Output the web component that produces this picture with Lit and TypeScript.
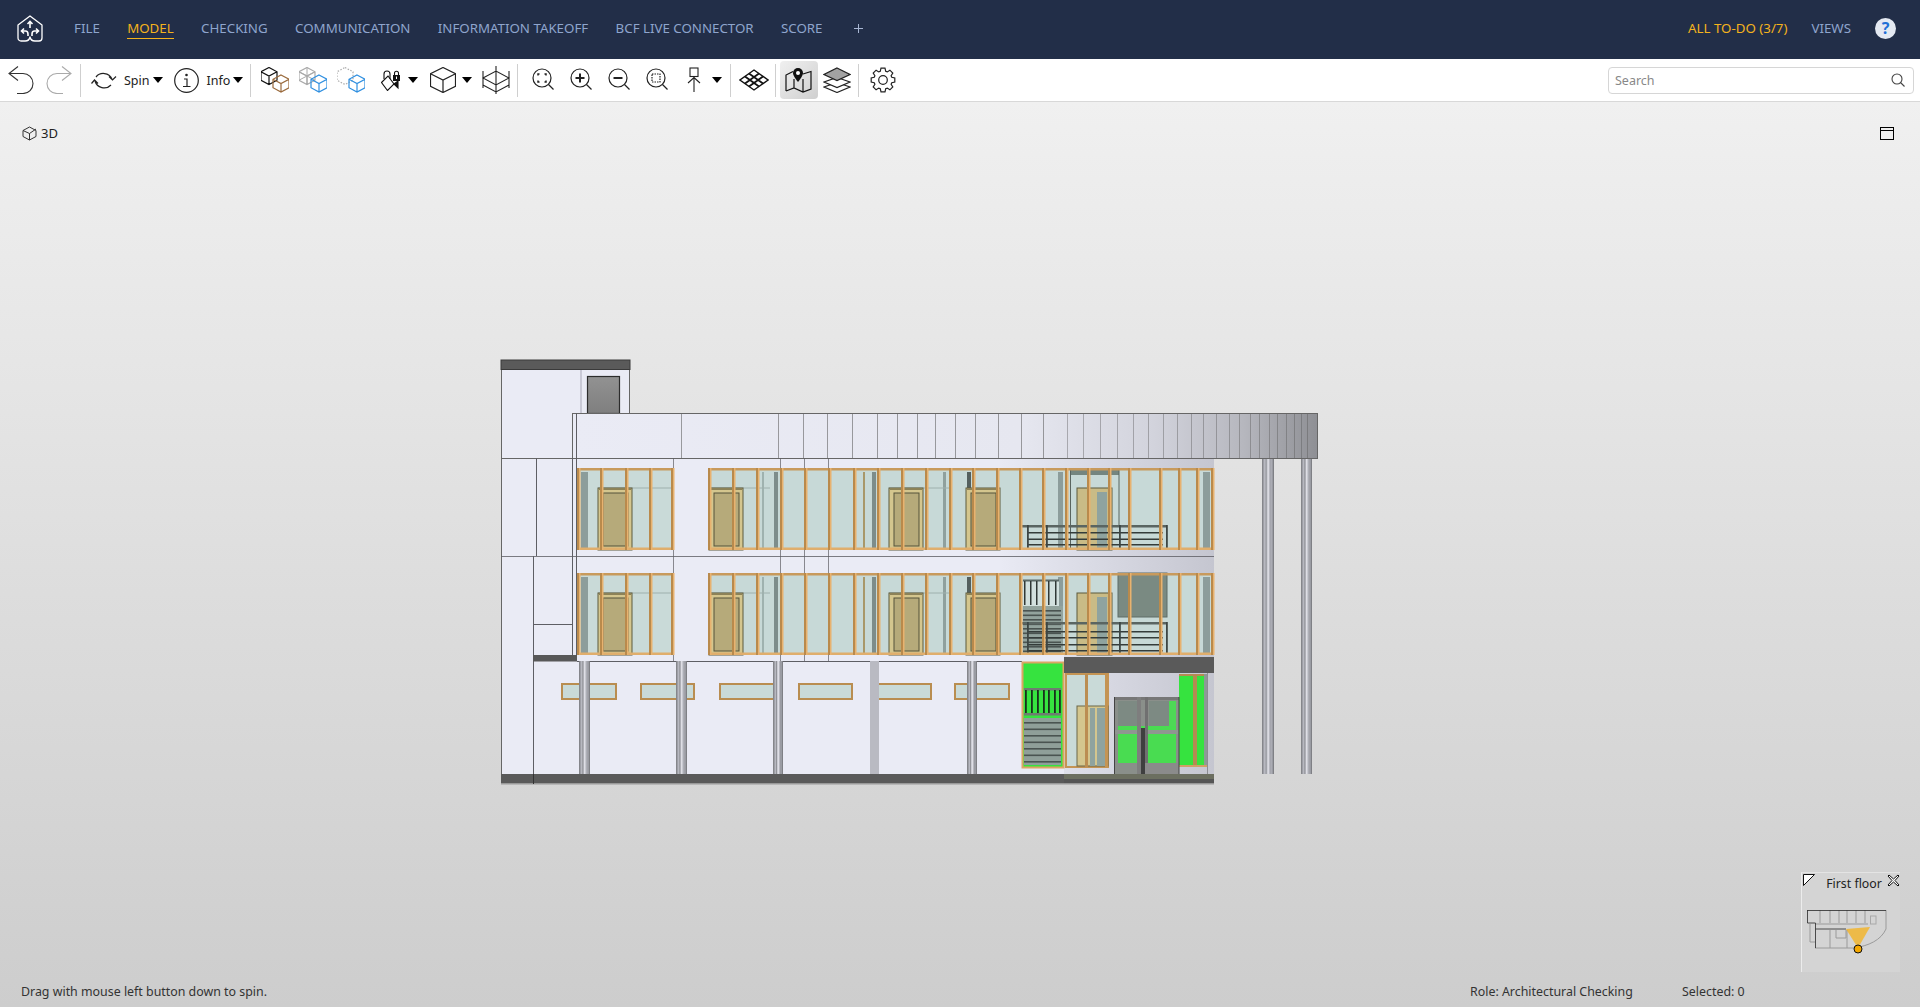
// app.ts
import { LitElement, html, css, svg } from 'lit';
import { customElement } from 'lit/decorators.js';

const NAV = ['FILE', 'MODEL', 'CHECKING', 'COMMUNICATION', 'INFORMATION TAKEOFF', 'BCF LIVE CONNECTOR', 'SCORE'];

/* --- facade measurements, in page pixels --- */
const BAND_LINES = [681, 778, 803, 827, 852, 877, 897, 917, 935, 955, 975, 998, 1021, 1043, 1067, 1083, 1100, 1117, 1133, 1148, 1163, 1177, 1191, 1203, 1216, 1229, 1239, 1250, 1259, 1269, 1277, 1286, 1294, 1301, 1307];
const MULLIONS = [577, 600, 625, 649, 671, 708, 732, 756, 780, 804, 828, 853, 877, 901, 925, 949, 972, 996, 1019, 1042, 1065, 1087, 1108, 1128, 1159, 1178, 1196, 1211];
const DOORS = [598, 709, 889, 966];
const ROWS = [{ top: 468, bottom: 550 }, { top: 573, bottom: 655 }];
const GROUND_COLS = [[579, 11], [676, 11], [773, 10], [870, 9], [967, 10]];
const SMALL_WINDOWS = [[561, 617], [640, 695], [719, 783], [798, 853], [870, 932], [954, 1010]];
// things seen through the glass: x, width, colour
const GLASS_POSTS: [number, number, string][] = [
  [581, 7, '#8c9d9b'], [762, 2, '#9fb2af'], [774, 4, '#7d8d8b'], [863, 2, '#a8986a'], [872, 4, '#7d8d8b'],
  [943, 3, '#8fa09d'], [967, 4, '#54605e'], [1058, 5, '#8c9d9b'], [1203, 7, '#8c9d9b'],
];

/* --- little svg helpers --- */
const cube = (cx: number, cy: number, dx: number, h: number, color: string, extra = '') => svg`
  <path fill="none" stroke=${color} stroke-width="1.2" stroke-dasharray=${extra || 'none'}
    d="M${cx} ${cy - h}L${cx + dx} ${cy - h / 2}V${cy + h / 2}L${cx} ${cy + h}L${cx - dx} ${cy + h / 2}V${cy - h / 2}Z
       ${extra ? '' : `M${cx - dx} ${cy - h / 2}L${cx} ${cy}L${cx + dx} ${cy - h / 2}M${cx} ${cy}V${cy + h}`}"/>`;

const lens = (inner: unknown) => html`
  <svg width="24" height="24" viewBox="-1.500 0.500 24 24" fill="none" stroke="#222" stroke-width="1.2">
    <circle cx="10.500" cy="10.500" r="9"/><path d="M17 17l5 5"/>${inner}
  </svg>`;

const gearPath = () => {
  const pts: string[] = [];
  const teeth = 8;
  for (let i = 0; i < teeth; i++) {
    const a = (i / teeth) * Math.PI * 2 - Math.PI / 2;
    [[-0.3, 9.2], [-0.17, 12], [0.17, 12], [0.3, 9.2]].forEach(([o, r]) => {
      pts.push(`${(13 + Math.cos(a + o) * r).toFixed(1)} ${(13 + Math.sin(a + o) * r).toFixed(1)}`);
    });
  }
  return `M${pts.join('L')}Z`;
};

const ICONS = {
  undo: html`<svg width="26" height="28" viewBox="0 0 26 28" fill="none" stroke="#333" stroke-width="1.1"><path d="M10 0.500L1 7.500L10 14.500M1 7.500H15A10 10 0 0 1 15 27.500H9"/></svg>`,
  redo: html`<svg width="26" height="28" viewBox="0 0 26 28" fill="none" stroke="#aaa" stroke-width="1.1"><path d="M16 0.500L25 7.500L16 14.500M25 7.500H11A10 10 0 0 0 11 27.500H17"/></svg>`,
  spin: html`<svg width="26" height="22" viewBox="0 0 26 22" fill="none" stroke="#222" stroke-width="1.2"><path d="M5 8A9.500 9.500 0 0 1 21 10M18 7.500L21.500 11L25 7.500"/><path d="M4 12A9.500 9.500 0 0 0 20 16M.5 14.500L3.500 11L7 14.500"/></svg>`,
  info: html`<svg width="25" height="25" viewBox="0 0 25 25" fill="none" stroke="#222" stroke-width="1.2"><circle cx="12.500" cy="12.500" r="11.800"/><circle cx="12.500" cy="7" r="1.300" fill="#222" stroke="none"/><path d="M10 11H13V18.500M9 18.500H16.500"/></svg>`,
  showAll: html`<svg width="28" height="26" viewBox="0 0 28 26">${cube(8, 9, 8, 8.500, '#111')}${cube(20, 16.500, 8, 8.500, '#9a6a3c')}</svg>`,
  wire: html`<svg width="28" height="26" viewBox="0 0 28 26">${cube(8, 9, 8, 8.500, '#aaa')}<path d="M0 4.800L16 13.200M16 4.800L0 13.200M8 .5V17.500" stroke="#aaa" fill="none"/>${cube(20, 16.500, 8, 8.500, '#2f8fe0')}</svg>`,
  ghost: html`<svg width="28" height="26" viewBox="0 0 28 26">${cube(8, 9, 8, 8.500, '#aaa', '1.500 1.500')}${cube(20, 16.500, 8, 8.500, '#2f8fe0')}</svg>`,
  paint: html`<svg width="20" height="21" viewBox="0 0 20 21" fill="none" stroke="#111" stroke-width="1.1"><path d="M.5 12.500L7 6L13 14L6.500 20.500Z"/><path d="M3 9V4A3 3 0 0 1 9 4V9"/><rect x="12" y="5" width="7" height="6" fill="#111" stroke="none"/><path d="M13.500 5V3.200A2 2 0 0 1 17.500 3.200V5"/><rect x="15" y="6.500" width="1" height="2.500" fill="#fff" stroke="none"/><path d="M13 14L17 11V18Z" fill="#111"/></svg>`,
  box: html`<svg width="26" height="26" viewBox="0 0 26 26">${cube(13, 13, 12.500, 12.500, '#222')}</svg>`,
  section: html`<svg width="28" height="28" viewBox="0 0 28 28" fill="none" stroke="#222" stroke-width="1.1"><path d="M1 5V22M27 5V22M1 12L14 5L27 12L14 19ZM1 19L14 26L27 19M14 0V28"/></svg>`,
  fit: lens(svg`<path d="M6.500 8V6.500H8M13 6.500H14.500V8M14.500 13V14.500H13M8 14.500H6.500V13" stroke-width="1.500"/>`),
  plus: lens(svg`<path d="M6 10.500H15M10.500 6V15" stroke-width="2"/>`),
  minus: lens(svg`<path d="M6 10.500H15" stroke-width="2"/>`),
  select: lens(svg`<rect x="6.500" y="6.500" width="8" height="8" stroke-dasharray="1.500 1"/>`),
  pin: html`<svg width="14" height="26" viewBox="0 0 14 26" fill="none" stroke="#222" stroke-width="1.1"><rect x="3" y="1" width="8" height="8.500"/><path d="M7 9.500V25M1 16L7 10.500L13 16"/></svg>`,
  grid: html`<svg width="30" height="22" viewBox="0 0 30 22" fill="none" stroke="#111" stroke-width="1.400"><path d="M15 1L29 11L15 21L1 11Z"/><path d="M10 4.500L24 14.500M6 7.500L20 17.500M20 4.500L6 14.500M24 7.500L10 17.500" stroke-width="1.800"/></svg>`,
  map: html`<svg width="28" height="26" viewBox="0 0 28 26" fill="none" stroke="#111" stroke-width="1.200"><path d="M1 24V8L8 4.500M18 7L26 4.500V22L18 25L9 21L1 24M9 12V21M18 12V25"/><path d="M13 15C9.500 10.500 8 8 8 6A5 5 0 0 1 18 6C18 8 16.500 10.500 13 15Z" fill="#111" stroke="none"/><circle cx="13" cy="6" r="2" fill="#fff" stroke="none"/></svg>`,
  layers: html`<svg width="28" height="26" viewBox="0 0 28 26" stroke="#222" stroke-width="1.200"><path d="M14 15.500L27 20L14 25.500L1 20Z" fill="#fff"/><path d="M14 10.500L27 15L14 20.500L1 15Z" fill="#fff"/><path d="M14 1L27 7.500L14 13.500L1 7.500Z" fill="#a2a2a2"/></svg>`,
  gear: html`<svg width="26" height="26" viewBox="0 0 26 26" fill="none" stroke="#222" stroke-width="1.200"><path d=${gearPath()}/><circle cx="13" cy="13" r="4.300"/></svg>`,
};

/* --- building, drawn as one free canvas --- */
const column = (x: number, w: number, y0: number, y1: number) => svg`
  <rect x=${x} y=${y0} width=${w} height=${y1 - y0} fill="#b7b8c0"/>
  <rect x=${x} y=${y0} width="1.500" height=${y1 - y0} fill="#85868b"/>
  <rect x=${x + w * 0.3} y=${y0} width="1" height=${y1 - y0} fill="#929399"/>
  <rect x=${x + w * 0.45} y=${y0} width="1.500" height=${y1 - y0} fill="#dedee5"/>
  <rect x=${x + w * 0.7} y=${y0} width="1" height=${y1 - y0} fill="#9a9ba2"/>
  <rect x=${x + w - 1.5} y=${y0} width="1.500" height=${y1 - y0} fill="#7f8085"/>`;

const door = (x: number, top: number, bottom: number) => svg`
  <rect x=${x} y=${top} width="34" height=${bottom - top} fill="#d4c68e" stroke="#5c5a3c" stroke-width="1"/>
  <rect x=${x + 1} y=${top} width="32" height="2" fill="#8c8258"/>
  <rect x=${x + 5} y=${top + 5} width="25" height=${bottom - top - 9} fill="#b6aa7a" stroke="#55533a" stroke-width="1"/>`;

const balcony = (rail: number, bars: number[], bottom: number) => svg`
  <rect x="1022" y=${rail} width="145" height="2.500" fill="#5a6562"/>
  ${bars.map((y) => svg`<rect x="1027" y=${y} width="136" height="1.500" fill="#343c3a"/>`)}
  ${[1027, 1046, 1119, 1166].map((x) => svg`<rect x=${x} y=${rail} width="1.800" height=${bottom - rail} fill="#3d4644"/>`)}`;

const treads = (x: number, w: number, y0: number, y1: number, step: number) => {
  const lines = [];
  for (let y = y0; y < y1; y += step) {
    lines.push(svg`<rect x=${x} y=${y} width=${w} height="1.600" fill="#4a5451"/>`);
  }
  return lines;
};

const building = () => svg`
  <svg class="canvas" viewBox="0 0 1920 905" width="1920" height="905">
    <defs>
      <linearGradient id="bandFade" gradientUnits="userSpaceOnUse" x1="572" x2="1318" y1="0" y2="0">
        <stop offset="0" stop-color="#eaebf5"/><stop offset=".6" stop-color="#e6e7f0"/>
        <stop offset=".78" stop-color="#d2d3dc"/><stop offset=".9" stop-color="#b6b7be"/><stop offset="1" stop-color="#8e8f94"/>
      </linearGradient>
      <linearGradient id="stripFade" gradientUnits="userSpaceOnUse" x1="1000" x2="1214" y1="0" y2="0">
        <stop offset="0" stop-color="#e9eaf4"/><stop offset="1" stop-color="#c5c6d0"/>
      </linearGradient>
      <linearGradient id="roofDoor" x1="0" x2="0" y1="0" y2="1">
        <stop offset="0" stop-color="#929292"/><stop offset="1" stop-color="#7f7f7f"/>
      </linearGradient>
    </defs>
    <g transform="translate(0 -102)" stroke-width="1">
      <!-- right free-standing columns -->
      ${column(1262, 12, 458, 774)}
      ${column(1301, 11, 458, 774)}

      <!-- tower -->
      <rect x="501.500" y="369" width="128" height="90" fill="#eaebf5" stroke="#666"/>
      <rect x="580" y="369" width="2" height="44" fill="#c9c9d6"/>
      <rect x="501" y="360" width="129" height="9.500" fill="#5a5a5a" stroke="#3a3a3a"/>
      <rect x="587.500" y="376.500" width="32" height="37" fill="url(#roofDoor)" stroke="#2c2c2c" stroke-width="1.200"/>

      <!-- main wall -->
      <rect x="501.500" y="458.500" width="712" height="316" fill="#eaebf5" stroke="#666"/>
      <rect x="1000" y="459" width="214" height="10" fill="url(#stripFade)"/>
      <rect x="1000" y="550" width="214" height="23" fill="url(#stripFade)"/>
      <rect x="1064" y="655" width="150" height="119" fill="url(#stripFade)"/>

      <!-- roof band -->
      <rect x="572.500" y="413.500" width="745" height="45" fill="url(#bandFade)" stroke="#666"/>
      ${BAND_LINES.map((x) => svg`<path d="M${x + 0.5} 414V458" stroke="#555" stroke-opacity=${x < 1067 ? 0.55 : 0.4}/>`)}

      <!-- wall joints -->
      <g fill="none" stroke="#5e5e64">
        <path d="M501 556.500H1214" stroke-opacity=".8"/>
        <path d="M536.500 458V556M533.500 556V784M533 624.500H572M572.500 458V655M576.500 413V655"/>
        <path d="M673.500 458V661M780.500 458V661M804.500 458V661M828.500 458V661" stroke-opacity=".7"/>
        <path d="M577 661.500H1022"/>
      </g>
      <rect x="533" y="655" width="44" height="6.500" fill="#585858"/>

      <!-- glazing for the two upper rows -->
      ${ROWS.map((r) => svg`
        <rect x="577" y=${r.top} width="96" height=${r.bottom - r.top} fill="#c9dad8"/>
        <rect x="708" y=${r.top} width="505" height=${r.bottom - r.top} fill="#c7d9d7"/>
        ${GLASS_POSTS.map(([x, w, c]) => svg`<rect x=${x} y=${r.top + 4} width=${w} height=${r.bottom - r.top - 5} fill=${c}/>`)}
        <path d=${`M598 ${r.top + 20}H673M708 ${r.top + 20}H770M889 ${r.top + 20}H950`} stroke="#9eb0ad"/>
        ${DOORS.map((x) => door(x, r.top + 20, r.bottom))}
        <rect x="1077" y=${r.top + 20} width="35" height=${r.bottom - r.top - 20} fill="#c9bb86" stroke="#5c5a3c"/>
        <rect x="1097" y=${r.top + 24} width="10" height=${r.bottom - r.top - 24} fill="#8fa39f"/>
      `)}

      <!-- upper row extras -->
      <rect x="1070" y="468" width="49" height="7" fill="#74857f"/>
      <path d="M1070.500 468V550M1119 468V526" stroke="#59645f" fill="none"/>
      ${balcony(525, [532, 538.500, 544], 550)}

      <!-- lower row extras: stair + panel -->
      <rect x="1118" y="573" width="49" height="44" fill="#7a8a82" stroke="#5f6d67"/>
      <rect x="1023" y="580" width="36" height="27" fill="#d2e0de"/>
      <rect x="1023" y="579.500" width="36" height="2" fill="#5c6966"/>
      ${[1024, 1030, 1036, 1043, 1048, 1055].map((x) => svg`<rect x=${x} y="581" width="1.500" height="24" fill="#303836"/>`)}
      <rect x="1023" y="606" width="40" height="49" fill="#92a39d"/>
      ${treads(1023, 38, 610, 654, 4.500)}
      ${balcony(622, [631, 637, 644, 650], 655)}

      <!-- mullions + frames -->
      ${ROWS.map((r) => svg`
        <rect x="577" y=${r.top} width="96" height="2.500" fill="#c89a5c"/>
        <rect x="708" y=${r.top} width="505" height="2.500" fill="#c89a5c"/>
        <rect x="577" y=${r.bottom - 2.5} width="96" height="2.500" fill="#e0ae6c"/>
        <rect x="708" y=${r.bottom - 2.5} width="505" height="2.500" fill="#e0ae6c"/>
        ${MULLIONS.map((x) => svg`
          <rect x=${x} y=${r.top} width="2" height=${r.bottom - r.top} fill="#b98a4c"/>
          <rect x=${x + 2} y=${r.top} width="1.500" height=${r.bottom - r.top} fill="#e8b26f"/>`)}
      `)}

      <!-- ground floor -->
      ${SMALL_WINDOWS.map(([a, b]) => svg`
        <rect x=${a + 1} y="684" width=${b - a - 2} height="15" fill="#c9dad8" stroke="#b98d50" stroke-width="2"/>`)}
      ${GROUND_COLS.map(([x, w]) => (w === 9
        ? svg`<rect x=${x} y="661" width=${w} height="113" fill="#b9bac2"/>`
        : column(x, w, 661, 774)))}

      <!-- green stair window -->
      <rect x="1022.500" y="662.500" width="41" height="105" fill="#36e33f" stroke="#dca563" stroke-width="2"/>
      <rect x="1024" y="688" width="37" height="2.500" fill="#6f7c72"/>
      ${[1025, 1031, 1037, 1043, 1048, 1054, 1059].map((x) => svg`<rect x=${x} y="690" width="1.800" height="24" fill="#18301c"/>`)}
      <rect x="1024" y="713" width="37" height="2.500" fill="#6f7c72"/>
      <rect x="1024" y="718" width="37" height="47" fill="#8f9f99"/>
      ${treads(1024, 37, 722, 764, 6.500)}

      <!-- canopy slab -->
      <rect x="1064" y="657" width="150" height="16" fill="#5a5a5a"/>

      <!-- ground glazing left of entrance -->
      <rect x="1066" y="674" width="42" height="93" fill="#c9dad8" stroke="#c49454" stroke-width="2"/>
      <rect x="1077" y="706" width="31" height="60" fill="#d4c68e" stroke="#6a6648"/>
      <rect x="1090" y="708" width="5" height="58" fill="#8fa39f"/>
      <rect x="1097" y="708" width="10" height="58" fill="#8fa39f"/>
      <rect x="1085" y="674" width="3" height="93" fill="#bb8d52"/>
      <rect x="1105" y="674" width="3" height="93" fill="#c49454"/>

      <!-- green sidelight -->
      <rect x="1179" y="674" width="28" height="93" fill="#36e33f"/>
      <rect x="1179" y="674" width="28" height="2" fill="#b58a52"/>
      <rect x="1193" y="674" width="4" height="93" fill="#b58a52"/>
      <rect x="1204" y="674" width="3" height="93" fill="#8d9a95"/>
      <rect x="1179" y="765" width="28" height="2" fill="#cfa066"/>
      <path d="M1207.500 673V774" stroke="#8d8d92"/>

      <!-- entrance doors -->
      <rect x="1114" y="697" width="65" height="77" fill="#8a8f8a"/>
      <rect x="1118" y="726" width="58" height="37" fill="#49dc51"/>
      <rect x="1118" y="701" width="22" height="25" fill="#7d8a83"/>
      <rect x="1149" y="701" width="20" height="25" fill="#7d8a83"/>
      <rect x="1169" y="701" width="7" height="25" fill="#4ed856"/>
      <rect x="1114" y="697" width="65" height="3" fill="#777"/>
      <rect x="1115" y="730" width="63" height="4" fill="#8f9691"/>
      <rect x="1137" y="697" width="4" height="77" fill="#7e7e7e"/>
      <rect x="1141" y="728" width="4" height="46" fill="#3f3f3f"/>
      <rect x="1145" y="697" width="3" height="77" fill="#707070"/>
      <rect x="1145" y="763" width="34" height="11" fill="#8b8b8b"/>
      <path d="M1114.500 697V774M1179 697V774" stroke="#444" fill="none"/>

      <!-- plinth -->
      <rect x="501" y="774" width="563" height="9.500" fill="#5a5a5a"/>
      <rect x="1064" y="774" width="150" height="5" fill="#6c6f60"/>
      <rect x="1064" y="779" width="150" height="4.500" fill="#555"/>
      <path d="M501 784H1214" stroke="#9a9a9a"/>
      <path d="M533.500 774V784" stroke="#333"/>
    </g>
  </svg>`;

@customElement('app-root')
export class AppRoot extends LitElement {
  static override styles = css`
    :host {
      display: flex;
      flex-direction: column;
      height: 1007px;
      width: 1920px;
      overflow: hidden;
      font-family: "Noto Sans", "Open Sans", sans-serif;
      color: #222;
    }

    /* top nav */
    .nav {
      height: 59px;
      flex: none;
      background: #222e48;
      display: flex;
      align-items: center;
      padding: 0 17px 3px;
      font-size: 13.3px;
      color: #8fa5cd;
      box-sizing: border-box;
    }
    .logo { width: 26px; height: 27px; margin-right: 31px; }
    .nav-items { display: flex; gap: 27.4px; align-items: center; }
    .nav-item { padding: 2px 0 1px; border-bottom: 1px solid transparent; }
    .nav-item.active { color: #f4b31c; border-bottom-color: #f4b31c; }
    .add { display: block; margin-left: 4px; }
    .spacer { flex: 1; }
    .todo { color: #f4b31c; margin-right: 24px; }
    .help {
      width: 21px;
      height: 21px;
      border-radius: 50%;
      background: #e4e9f2;
      color: #1f6fd6;
      font-weight: 700;
      font-size: 16px;
      line-height: 21px;
      text-align: center;
      margin: 0 7px 0 24px;
    }

    /* toolbar */
    .toolbar {
      height: 43px;
      flex: none;
      box-sizing: border-box;
      background: #fff;
      border-bottom: 1px solid #d8d8d8;
      display: flex;
      align-items: center;
      padding: 0 6px 0 2px;
      font-size: 12.5px;
    }
    .tool {
      width: 38px;
      height: 38px;
      flex: none;
      display: flex;
      align-items: center;
      justify-content: center;
      box-sizing: border-box;
    }
    .tool.narrow { width: 35px; margin-left: 3px; }
    .tool.active {
      border-radius: 4px;
      background: linear-gradient(135deg, #f0f0f0, #cfcfcf);
    }
    .sep { width: 1px; height: 33px; background: #cfcfcf; flex: none; margin: 0 4px 0 2px; }
    .sep.wide { margin: 0 5px 0 7px; }
    .sep.tail { margin: 0 4px 0 1px; }
    .sep.roomy { margin-right: 5px; }
    .label { margin: 0 3px 0 1px; }
    .caret {
      width: 0;
      height: 0;
      flex: none;
      border-left: 5.5px solid transparent;
      border-right: 5.5px solid transparent;
      border-top: 6px solid #000;
    }
    .caret.gap { margin-right: 5px; }
    .caret.box-gap { margin-right: 6px; }
    .caret.pin-gap { margin-left: -1px; margin-right: 7px; }
    .search {
      width: 306px;
      height: 27px;
      box-sizing: border-box;
      border: 1px solid #d6d6d6;
      border-radius: 4px;
      display: flex;
      align-items: center;
      justify-content: space-between;
      padding: 0 8px 0 6px;
      color: #888;
      font-size: 12.5px;
    }

    /* viewport */
    .view {
      position: relative;
      flex: 1;
      display: flex;
      flex-direction: column;
      background: linear-gradient(180deg, #f0f0f0 0%, #cdcdcd 100%);
      font-size: 13px;
    }
    .canvas { position: absolute; left: 0; top: 0; }
    .view-head {
      position: relative;
      display: flex;
      align-items: center;
      justify-content: space-between;
      padding: 22px 26px 0 22px;
    }
    .cam { display: flex; align-items: center; gap: 4px; color: #222; }
    .status {
      position: relative;
      margin-top: auto;
      display: flex;
      padding: 0 0 6px 21px;
      font-size: 12.4px;
      line-height: 18px;
      color: #333;
    }
    .role { margin-left: auto; width: 212px; }
    .selected { width: 238px; }

    /* floor plan inset */
    .mini {
      position: absolute;
      left: 1801px;
      top: 770px;
      width: 99px;
      height: 100px;
      box-sizing: border-box;
      background: #d4d4d4;
      border-left: 1px solid #ececec;
      border-top: 1px solid #e4e4e4;
      font-size: 12.3px;
    }
    .mini-head {
      display: flex;
      align-items: flex-start;
      justify-content: space-between;
      height: 36px;
      padding: 1px 0 0 1px;
      line-height: 20px;
      color: #222;
    }
    .mini-title { margin-left: 6px; }
    .plan { display: block; margin-left: 5px; overflow: visible; }
  `;

  override render() {
    return html`
      <div class="nav">
        <svg class="logo" viewBox="0 0 26 27" fill="none" stroke="#fff" stroke-width="1.300">
          <path d="M1 10L13 1L25 10V23A3 3 0 0 1 22 26H18A5 5 0 0 1 13 22A5 5 0 0 1 8 26H4A3 3 0 0 1 1 23Z" stroke-linejoin="round"/>
          <path d="M13 13V6.500M10.500 9L13 6.500L15.500 9" stroke-width="1.600"/>
          <path d="M7 13.500L4.500 16L7 18.500M4.500 16H8.500Q11 16 11 19V21" stroke-width="1.600"/>
          <path d="M19 13.500L21.500 16L19 18.500M21.500 16H17.500Q15 16 15 19V21" stroke-width="1.600"/>
        </svg>
        <div class="nav-items">
          ${NAV.map((n) => html`<span class="nav-item ${n === 'MODEL' ? 'active' : ''}">${n}</span>`)}
          <svg class="add" width="9" height="9" viewBox="0 0 9 9" stroke="#a8b6d2" stroke-width="1"><path d="M0 4.500H9M4.500 0V9"/></svg>
        </div>
        <span class="spacer"></span>
        <span class="todo">ALL TO-DO (3/7)</span>
        <span>VIEWS</span>
        <span class="help">?</span>
      </div>

      <div class="toolbar">
        <div class="tool">${ICONS.undo}</div>
        <div class="tool">${ICONS.redo}</div>
        <div class="sep"></div>
        <div class="tool">${ICONS.spin}</div>
        <span class="label">Spin</span><span class="caret gap"></span>
        <div class="tool">${ICONS.info}</div>
        <span class="label">Info</span><span class="caret"></span>
        <div class="sep wide"></div>
        <div class="tool">${ICONS.showAll}</div>
        <div class="tool">${ICONS.wire}</div>
        <div class="tool">${ICONS.ghost}</div>
        <div class="tool narrow">${ICONS.paint}</div>
        <span class="caret box-gap"></span>
        <div class="tool">${ICONS.box}</div>
        <span class="caret gap"></span>
        <div class="tool">${ICONS.section}</div>
        <div class="sep roomy"></div>
        <div class="tool">${ICONS.fit}</div>
        <div class="tool">${ICONS.plus}</div>
        <div class="tool">${ICONS.minus}</div>
        <div class="tool">${ICONS.select}</div>
        <div class="tool">${ICONS.pin}</div>
        <span class="caret pin-gap"></span>
        <div class="sep tail"></div>
        <div class="tool">${ICONS.grid}</div>
        <div class="sep"></div>
        <div class="tool active">${ICONS.map}</div>
        <div class="tool">${ICONS.layers}</div>
        <div class="sep roomy"></div>
        <div class="tool">${ICONS.gear}</div>
        <span class="spacer"></span>
        <div class="search">
          <span>Search</span>
          <svg width="14" height="14" viewBox="0 0 14 14" fill="none" stroke="#444" stroke-width="1.100"><circle cx="6" cy="6" r="5"/><path d="M9.500 9.500L13.500 13.500"/></svg>
        </div>
      </div>

      <div class="view">
        ${building()}
        <div class="view-head">
          <span class="cam">
            <svg width="15" height="15" viewBox="0 0 15 15" fill="none" stroke="#333" stroke-width="1"><path d="M7.500 1L14 4.500V10.500L7.500 14L1 10.500V4.500ZM1 4.500L7.500 7.500L14 3M7.500 7.500V14"/></svg>
            3D
          </span>
          <svg width="14" height="13" viewBox="0 0 14 13" fill="none" stroke="#000" stroke-width="1"><rect x=".5" y=".5" width="13" height="12"/><path d="M0 3.500H14"/></svg>
        </div>
        <div class="status">
          <span>Drag with mouse left button down to spin.</span>
          <span class="role">Role: Architectural Checking</span>
          <span class="selected">Selected: 0</span>
        </div>
        <div class="mini">
          <div class="mini-head">
            <svg width="12" height="12" viewBox="0 0 12 12" fill="#fff" stroke="#111"><path d="M.5 .5H11.500L.5 11.500Z"/></svg>
            <span class="mini-title">First floor</span>
            <svg width="13" height="13" viewBox="0 0 13 13" stroke="#111" fill="none"><path d="M2 1L6.500 5L11 1L12 2L8 6.500L12 11L11 12L6.500 8L2 12L1 11L5 6.500L1 2Z" fill="#fff"/></svg>
          </div>
          <svg class="plan" width="80" height="44" viewBox="0 0 80 44" fill="none">
            <path d="M79 0V19C74 30 62 36 46 38H8M13 0V13M23 0V13M32 0V13M40 0V13M49 0V13M58 0V13M8 14H61M23 20V38M29 20V28H39V20M40 20V38M3 14V32H8" stroke="#9a9a9a"/>
            <rect x="63.500" y="6" width="5.500" height="8" stroke="#a8a8a8"/>
            <path d="M0 .5H79M.5 0V13H8.500V26M8.500 26V38M8.500 19H39" stroke="#333" stroke-opacity=".85"/>
            <path d="M51 38L39 19L63 17Z" fill="#f6b21a" fill-opacity=".75"/>
            <circle cx="51" cy="39" r="4" fill="#f5a800" stroke="#111"/>
          </svg>
        </div>
      </div>
    `;
  }
}

declare global {
  interface HTMLElementTagNameMap { 'app-root': AppRoot; }
}
